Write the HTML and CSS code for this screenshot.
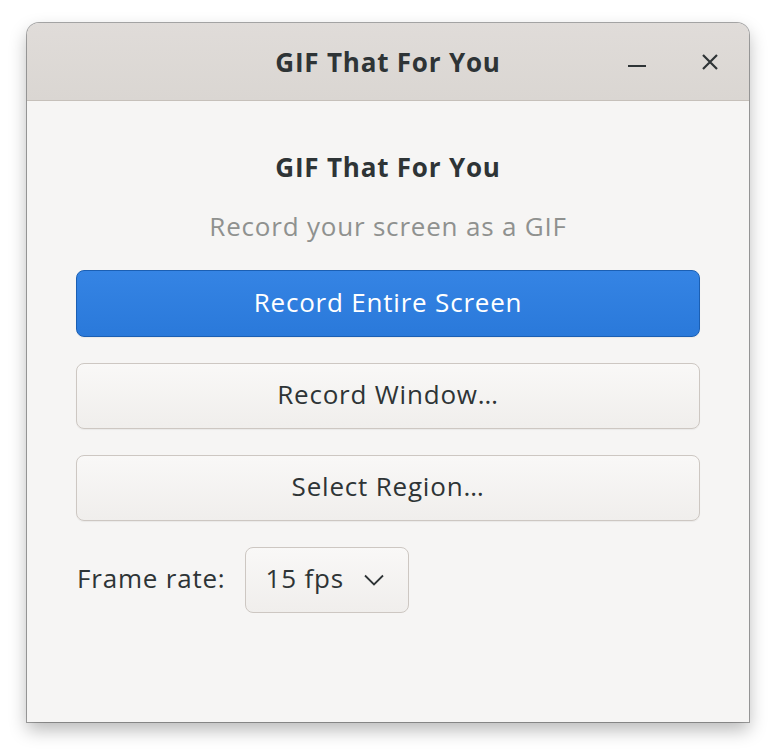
FILE: index.html
```html
<!DOCTYPE html>
<html>
<head>
<meta charset="utf-8">
<link rel="stylesheet" href="styles.css">
</head>
<body>
<div class="window">
  <header class="headerbar">
    <div class="hb-title">GIF That For You</div>
    <div class="hb-controls">
      <button class="hb-btn" aria-label="Minimize">
        <svg width="20" height="20" viewBox="0 0 20 20"><path d="M1 14h18" stroke="#2e3436" stroke-width="2"/></svg>
      </button>
      <button class="hb-btn" aria-label="Close">
        <svg width="20" height="20" viewBox="0 0 20 20"><path d="M3 3l14 14M17 3L3 17" stroke="#2e3436" stroke-width="2.2"/></svg>
      </button>
    </div>
  </header>
  <main class="content">
    <h1 class="heading">GIF That For You</h1>
    <p class="subtitle">Record your screen as a GIF</p>
    <button class="btn btn-primary">Record Entire Screen</button>
    <button class="btn">Record Window…</button>
    <button class="btn">Select Region…</button>
    <div class="rate-row">
      <span class="rate-label">Frame rate:</span>
      <button class="dropdown">
        <span>15 fps</span>
        <svg width="22" height="12" viewBox="0 0 22 12"><path d="M2 1.5l9 9 9-9" fill="none" stroke="#2e3436" stroke-width="1.8"/></svg>
      </button>
    </div>
  </main>
</div>
</body>
</html>
```
FILE: styles.css
```css
html, body {
  margin: 0;
  padding: 0;
  background: #ffffff;
}
body {
  width: 776px;
  height: 756px;
  overflow: hidden;
  font-family: "Open Sans", "Noto Sans", sans-serif;
}
.window {
  margin: 23px 0 0 27px;
  width: 722px;
  height: 699px;
  border-radius: 12px 12px 0 0;
  background: #f6f5f4;
  box-shadow: 0 0 0 1px rgba(0,0,0,0.33), 0 8px 18px rgba(0,0,0,0.28);
  display: flex;
  flex-direction: column;
  overflow: hidden;
}
.headerbar {
  height: 77px;
  flex: none;
  background: linear-gradient(#e0dcd9, #dad6d2);
  border-bottom: 1px solid #c6c0ba;
  display: flex;
  align-items: center;
  justify-content: center;
  position: relative;
}
.hb-title {
  font-weight: 700;
  font-size: 26px;
  letter-spacing: 0.8px;
  color: #2e3436;
}
.hb-controls {
  position: absolute;
  right: 21px;
  top: 0;
  bottom: 0;
  display: flex;
  align-items: center;
  gap: 37px;
}
.hb-btn {
  border: 0;
  background: none;
  padding: 0;
  width: 36px;
  height: 36px;
  display: flex;
  align-items: center;
  justify-content: center;
}
.content {
  flex: 1;
  padding: 48px 49px 0 49px;
  display: flex;
  flex-direction: column;
}
.heading {
  margin: 0;
  text-align: center;
  font-size: 26px;
  font-weight: 700;
  letter-spacing: 0.8px;
  color: #2e3436;
  line-height: 36px;
}
.subtitle {
  margin: 23px 0 26px;
  text-align: center;
  font-size: 26px;
  letter-spacing: 0.8px;
  color: #8f918f;
  line-height: 36px;
}
.btn {
  height: 66px;
  margin: 0 0 26px;
  padding: 0 0 4px;
  border: 1px solid #cdc7c2;
  border-radius: 8px;
  background: linear-gradient(#f9f8f7, #f0eeec);
  font-family: inherit;
  font-size: 26px;
  letter-spacing: 0.8px;
  color: #2e3436;
  box-shadow: 0 1px 1px rgba(0,0,0,0.05);
}
.btn-primary {
  height: 67px;
  background: linear-gradient(#3584e4, #2a79da);
  border-color: #1b5fb3;
  color: #ffffff;
}
.rate-row {
  display: flex;
  align-items: center;
  gap: 19px;
  padding-left: 1px;
}
.rate-label {
  font-size: 26px;
  letter-spacing: 0.8px;
  color: #2e3436;
  padding-bottom: 4px;
}
.dropdown {
  width: 164px;
  height: 66px;
  border: 1px solid #cdc7c2;
  border-radius: 8px;
  background: linear-gradient(#f9f8f7, #f0eeec);
  font-family: inherit;
  font-size: 26px;
  letter-spacing: 0.8px;
  color: #2e3436;
  display: flex;
  align-items: center;
  justify-content: space-between;
  padding: 0 23px 4px 20px;
}
.dropdown svg {
  margin-top: 4px;
}
```
